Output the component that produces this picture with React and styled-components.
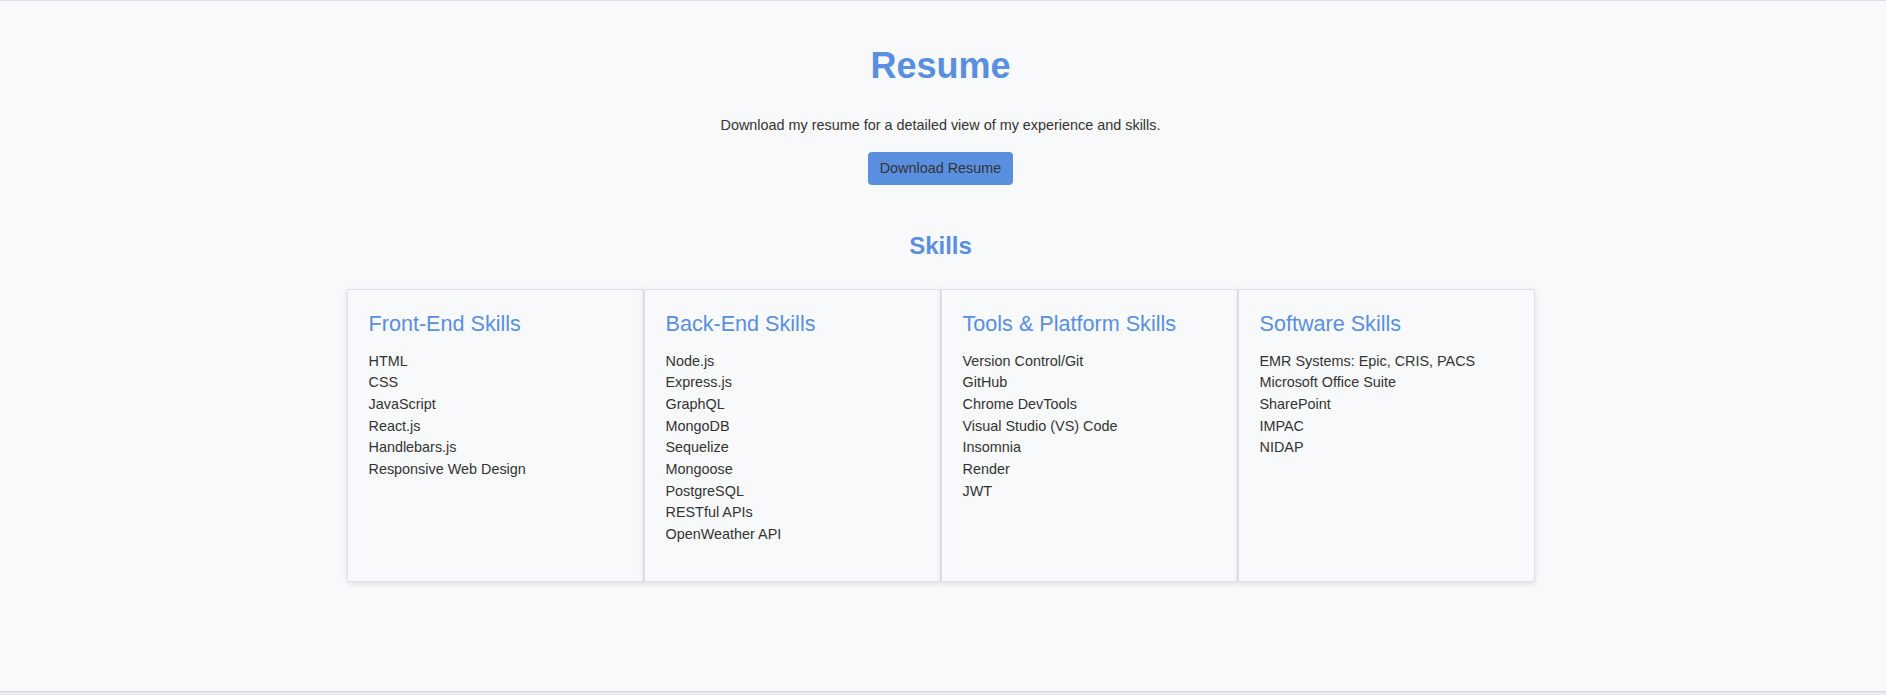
import React from 'react'
import styled, { createGlobalStyle } from 'styled-components'

const GlobalStyle = createGlobalStyle`
  html, body {
    margin: 0;
    padding: 0;
    background: #f8f9fa;
  }
  body {
    font-family: "Liberation Sans", Arial, Helvetica, sans-serif;
    color: #333;
  }
  * {
    box-sizing: border-box;
  }
`

const Page = styled.div`
  display: flex;
  flex-direction: column;
  min-height: 695px;
`

const ResumeSection = styled.section`
  border-top: 1px solid #dee2e6;
  padding: 43px 5px 109px 0;
  display: flex;
  flex-direction: column;
  align-items: center;
  text-align: center;
  background: #f8f9fa;
`

const Title = styled.h1`
  margin: 0;
  font-size: 36px;
  line-height: 44px;
  font-weight: 700;
  color: #5a8fe0;
`

const Intro = styled.p`
  margin: 27px 0 0;
  font-size: 14.4px;
  line-height: 21.6px;
`

const DownloadButton = styled.a`
  display: inline-block;
  margin-top: 15px;
  padding: 8px 12px;
  font-size: 14.4px;
  line-height: 17px;
  color: #333;
  background: #5a8fe0;
  border-radius: 4px;
  text-decoration: none;
  cursor: pointer;
`

const SubTitle = styled.h2`
  margin: 47px 0 0;
  font-size: 24px;
  line-height: 28px;
  font-weight: 700;
  color: #5a8fe0;
`

const SkillsGrid = styled.div`
  margin-top: 29px;
  width: 1188px;
  display: grid;
  grid-template-columns: repeat(4, 1fr);
  text-align: left;
`

const SkillCard = styled.div`
  height: 293px;
  padding: 21px;
  border: 1px solid #dee2e6;
  background: #f8f9fa;
  box-shadow: 0 2px 6px rgba(0, 0, 0, 0.1);
`

const CardTitle = styled.h3`
  margin: 0;
  font-size: 21.6px;
  line-height: 26px;
  font-weight: 400;
  color: #5a8fe0;
`

const SkillList = styled.ul`
  list-style: none;
  margin: 14px 0 0;
  padding: 0;
`

const SkillItem = styled.li`
  font-size: 14.4px;
  line-height: 21.65px;
  color: #333;
`

const Footer = styled.footer`
  flex: 1;
  border-top: 1px solid #d6d9dc;
  background: #e9ecef;
`

const skills = [
  {
    title: 'Front-End Skills',
    items: ['HTML', 'CSS', 'JavaScript', 'React.js', 'Handlebars.js', 'Responsive Web Design'],
  },
  {
    title: 'Back-End Skills',
    items: ['Node.js', 'Express.js', 'GraphQL', 'MongoDB', 'Sequelize', 'Mongoose', 'PostgreSQL', 'RESTful APIs', 'OpenWeather API'],
  },
  {
    title: 'Tools & Platform Skills',
    items: ['Version Control/Git', 'GitHub', 'Chrome DevTools', 'Visual Studio (VS) Code', 'Insomnia', 'Render', 'JWT'],
  },
  {
    title: 'Software Skills',
    items: ['EMR Systems: Epic, CRIS, PACS', 'Microsoft Office Suite', 'SharePoint', 'IMPAC', 'NIDAP'],
  },
]

function App() {
  return (
    <Page>
      <GlobalStyle />
      <ResumeSection>
        <Title>Resume</Title>
        <Intro>Download my resume for a detailed view of my experience and skills.</Intro>
        <DownloadButton>Download Resume</DownloadButton>

        {/* skills */}
        <SubTitle>Skills</SubTitle>
        <SkillsGrid>
          {skills.map((group) => (
            <SkillCard key={group.title}>
              <CardTitle>{group.title}</CardTitle>
              <SkillList>
                {group.items.map((item) => (
                  <SkillItem key={item}>{item}</SkillItem>
                ))}
              </SkillList>
            </SkillCard>
          ))}
        </SkillsGrid>
      </ResumeSection>
      <Footer />
    </Page>
  )
}

export default App
